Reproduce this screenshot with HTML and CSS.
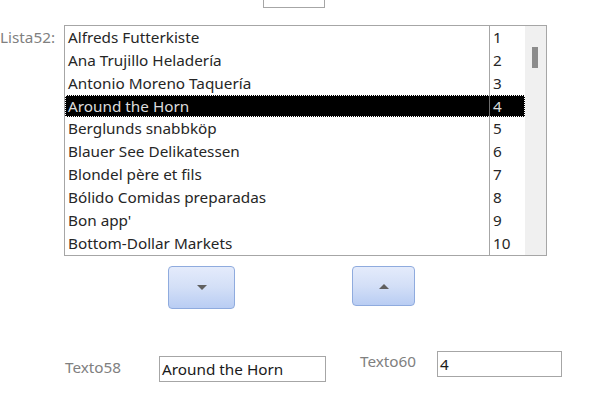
FILE: index.html
```html
<!DOCTYPE html>
<html lang="es">
<head>
<meta charset="utf-8">
<title>Formulario</title>
<link rel="stylesheet" href="styles.css">
</head>
<body>
<div class="form">
  <div class="stub"></div>

  <div class="list-row">
    <div class="list-label">Lista52:</div>
    <div class="listbox">
      <div class="items">
        <div class="item"><span class="name">Alfreds Futterkiste</span><span class="num">1</span></div>
        <div class="item"><span class="name">Ana Trujillo Heladería</span><span class="num">2</span></div>
        <div class="item"><span class="name">Antonio Moreno Taquería</span><span class="num">3</span></div>
        <div class="item selected"><span class="name">Around the Horn</span><span class="num">4</span></div>
        <div class="item"><span class="name">Berglunds snabbköp</span><span class="num">5</span></div>
        <div class="item"><span class="name">Blauer See Delikatessen</span><span class="num">6</span></div>
        <div class="item"><span class="name">Blondel père et fils</span><span class="num">7</span></div>
        <div class="item"><span class="name">Bólido Comidas preparadas</span><span class="num">8</span></div>
        <div class="item"><span class="name">Bon app'</span><span class="num">9</span></div>
        <div class="item"><span class="name">Bottom-Dollar Markets</span><span class="num">10</span></div>
      </div>
      <div class="scrollbar"><div class="thumb"></div></div>
    </div>
  </div>

  <div class="buttons">
    <button class="btn btn-down" type="button" aria-label="Siguiente"><span class="tri-down"></span></button>
    <button class="btn btn-up" type="button" aria-label="Anterior"><span class="tri-up"></span></button>
  </div>

  <div class="fields">
    <div class="label label-58">Texto58</div>
    <div class="textbox box-58">Around the Horn</div>
    <div class="label label-60">Texto60</div>
    <div class="textbox box-60">4</div>
  </div>
</div>
</body>
</html>
```

FILE: styles.css
```css
* { box-sizing: border-box; }

html, body {
  margin: 0;
  padding: 0;
  background: #ffffff;
}

.form {
  width: 589px;
  height: 402px;
  overflow: hidden;
  font-family: "Noto Sans", "Open Sans", sans-serif;
  font-size: 15.3px;
  color: #262626;
}

.stub {
  margin-left: 263px;
  width: 62px;
  height: 8px;
  border: 1px solid #a6a6a6;
  border-top: none;
}

.list-row {
  display: flex;
  margin-top: 17px;
}

.list-label {
  width: 64px;
  padding-top: 1px;
  line-height: 22.85px;
  color: #808080;
}

.listbox {
  width: 483px;
  height: 231px;
  border: 1px solid #a6a6a6;
  display: flex;
}

.items {
  width: 460px;
  background: linear-gradient(to right, transparent 424px, #a6a6a6 424px, #a6a6a6 425px, transparent 425px);
}

.item {
  display: flex;
  height: 22.85px;
  line-height: 22.85px;
  white-space: nowrap;
}

.name {
  width: 424px;
  padding-left: 3px;
}

.num {
  width: 36px;
  padding-left: 4px;
}

.item.selected {
  background: #000000;
  color: #dcdcdc;
  outline: 1px dotted #ffffff;
  outline-offset: -1px;
}

.item.selected .num {
  border-left: 1px solid #6e6e6e;
  padding-left: 3px;
}

.scrollbar {
  flex: 1;
  background: #f0f0f0;
  padding: 21px 0 0 7px;
}

.thumb {
  width: 6px;
  height: 21px;
  background: #8c8c8c;
}

.buttons {
  display: flex;
  align-items: flex-start;
  margin-top: 10px;
}

.btn {
  display: flex;
  align-items: center;
  justify-content: center;
  padding: 0;
  border: 1px solid #8fabde;
  border-radius: 4px;
  background: linear-gradient(to bottom, #e4ebfb 0%, #d3dff7 50%, #b9cdf3 100%);
}

.btn-down {
  margin-left: 168px;
  width: 67px;
  height: 43px;
}

.btn-up {
  margin-left: 117px;
  width: 63px;
  height: 40px;
}

.tri-down {
  width: 0;
  height: 0;
  border-left: 5px solid transparent;
  border-right: 5px solid transparent;
  border-top: 5px solid #606060;
}

.tri-up {
  width: 0;
  height: 0;
  border-left: 5px solid transparent;
  border-right: 5px solid transparent;
  border-bottom: 5px solid #606060;
}

.fields {
  display: flex;
  align-items: flex-start;
  margin-top: 42px;
}

.label {
  color: #808080;
  line-height: 20px;
}

.label-58 {
  margin-left: 65px;
  margin-top: 6px;
  width: 94px;
}

.label-60 {
  margin-left: 34px;
  margin-top: 0;
  width: 77px;
}

.textbox {
  height: 26px;
  border: 1px solid #a6a6a6;
  padding-left: 2px;
  line-height: 24px;
  white-space: nowrap;
  color: #1a1a1a;
}

.box-58 {
  margin-top: 5px;
  width: 167px;
}

.box-60 {
  width: 125px;
}
```
